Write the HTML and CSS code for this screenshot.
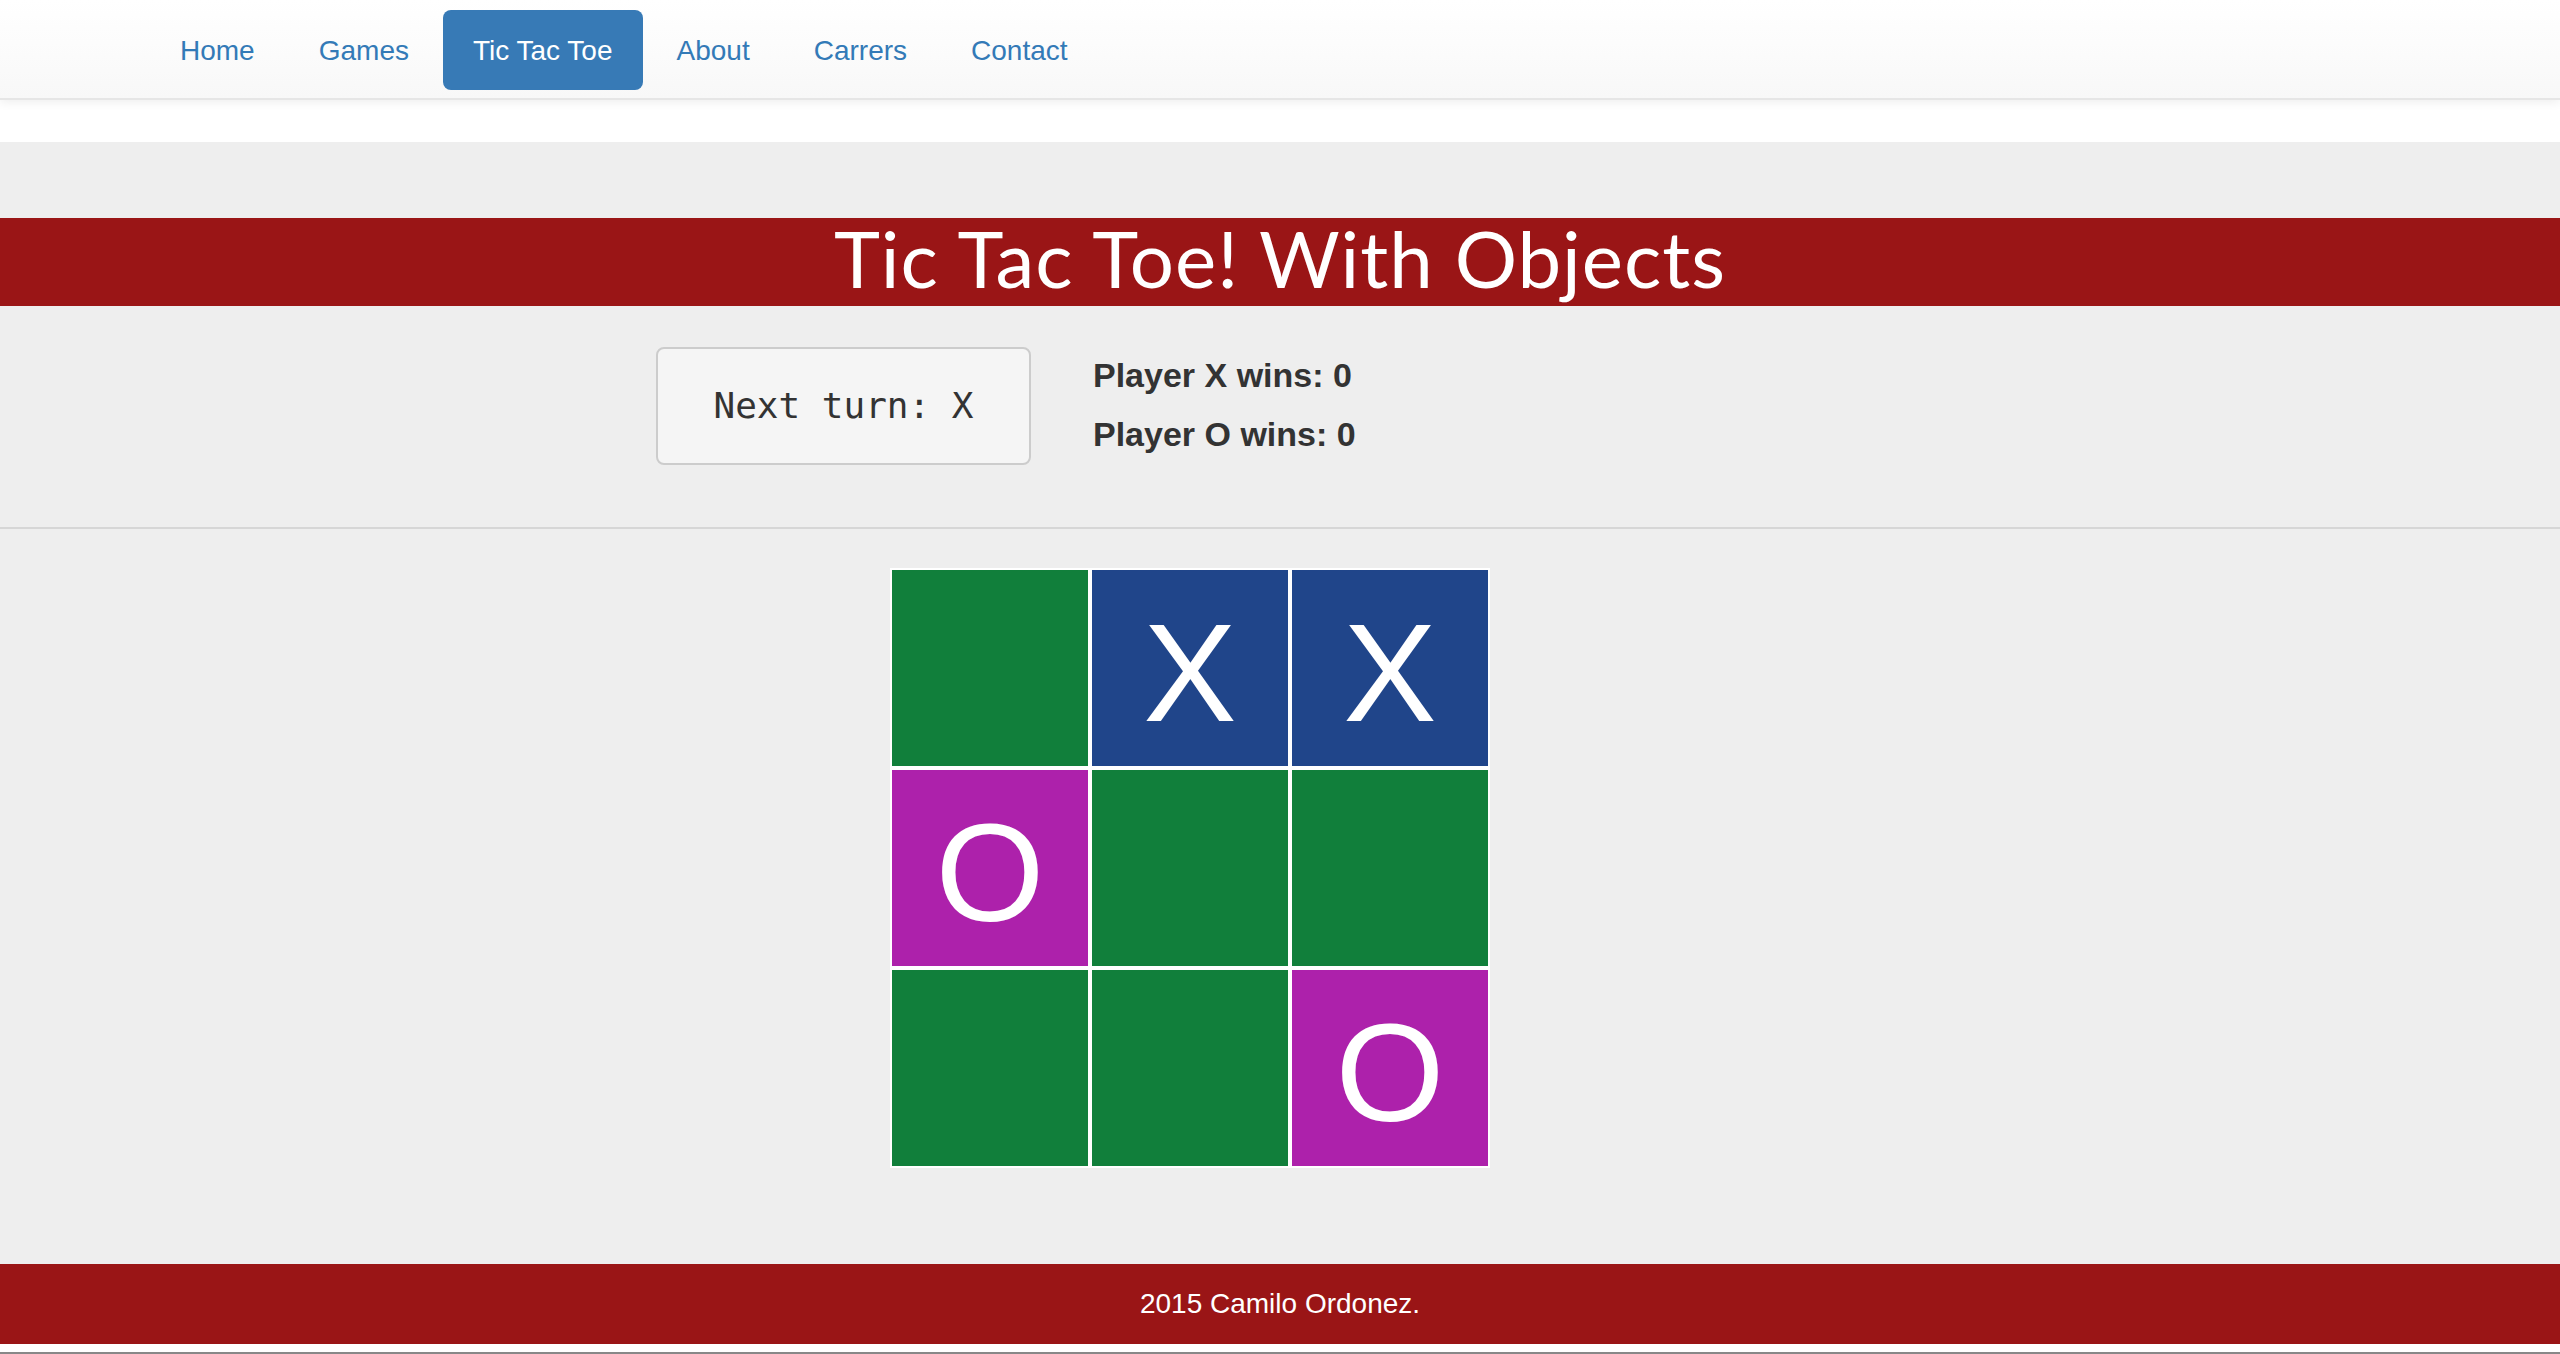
FILE: index.html
```html
<!DOCTYPE html>
<html lang="en">
<head>
<meta charset="utf-8">
<title>Tic Tac Toe! With Objects</title>
<link rel="stylesheet" href="styles.css">
</head>
<body>
<header class="navbar">
  <nav class="nav">
    <a class="nav-link" href="#">Home</a>
    <a class="nav-link" href="#">Games</a>
    <a class="nav-link active" href="#">Tic Tac Toe</a>
    <a class="nav-link" href="#">About</a>
    <a class="nav-link" href="#">Carrers</a>
    <a class="nav-link" href="#">Contact</a>
  </nav>
</header>
<main class="main">
  <h1 class="title">Tic Tac Toe! With Objects</h1>
  <section class="status">
    <pre class="turn">Next turn: X</pre>
    <div class="scores">
      <div class="score">Player X wins: 0</div>
      <div class="score">Player O wins: 0</div>
    </div>
  </section>
  <hr class="divider">
  <div class="board">
    <div class="cell empty"></div>
    <div class="cell x">X</div>
    <div class="cell x">X</div>
    <div class="cell o">O</div>
    <div class="cell empty"></div>
    <div class="cell empty"></div>
    <div class="cell empty"></div>
    <div class="cell empty"></div>
    <div class="cell o">O</div>
  </div>
</main>
<footer class="footer">2015 Camilo Ordonez.</footer>
<div class="window-edge"></div>
</body>
</html>
```
FILE: styles.css
```css
html, body {
  margin: 0;
  padding: 0;
  background: #ffffff;
  font-family: "Liberation Sans", Arial, sans-serif;
  color: #333333;
}

.navbar {
  position: relative;
  z-index: 2;
  box-sizing: border-box;
  height: 100px;
  background: linear-gradient(to bottom, #ffffff 0%, #f8f8f8 100%);
  border-bottom: 2px solid #e6e6e6;
  box-shadow: 0 2px 10px rgba(0, 0, 0, 0.075);
}

.nav {
  display: flex;
  gap: 4px;
  padding: 10px 0 0 150px;
}

.nav-link {
  display: block;
  box-sizing: border-box;
  height: 80px;
  padding: 2px 30px 0;
  line-height: 78px;
  font-size: 28px;
  color: #337ab7;
  text-decoration: none;
  border-radius: 8px;
}

.nav-link.active {
  background: #377ab6;
  color: #ffffff;
}

.main {
  margin-top: 42px;
  background: #eeeeee;
  padding: 76px 0 96px;
}

.title {
  margin: 0;
  height: 88px;
  box-sizing: border-box;
  padding-bottom: 8px;
  background: #9a1516;
  color: #ffffff;
  text-align: center;
  font-family: "Lato", "Open Sans", sans-serif;
  font-weight: 400;
  font-size: 78px;
  letter-spacing: 1px;
  line-height: 80px;
}

.status {
  display: flex;
  align-items: flex-start;
  gap: 62px;
  margin-top: 41px;
  padding-left: 656px;
}

.turn {
  margin: 0;
  box-sizing: border-box;
  width: 375px;
  height: 118px;
  background: #f5f5f5;
  border: 2px solid #cccccc;
  border-radius: 8px;
  color: #333333;
  font-family: "DejaVu Sans Mono", monospace;
  font-size: 36px;
  line-height: 114px;
  text-align: center;
}

.scores {
  display: flex;
  flex-direction: column;
  margin-top: -1px;
}

.score {
  font-size: 34px;
  font-weight: 700;
  line-height: 59px;
  color: #333333;
}

.divider {
  margin: 62px 0 0;
  height: 2px;
  border: 0;
  background: #d6d6d6;
}

.board {
  display: grid;
  grid-template-columns: repeat(3, 200px);
  grid-template-rows: repeat(3, 200px);
  width: 600px;
  margin: 39px 0 0 890px;
}

.cell {
  box-sizing: border-box;
  height: 200px;
  border: 2px solid #ffffff;
  color: #ffffff;
  font-family: "Liberation Sans", Arial, sans-serif;
  font-size: 140px;
  line-height: 206px;
  text-align: center;
  overflow: hidden;
}

.cell.empty { background: #117f3b; }
.cell.x { background: #20458a; }
.cell.o { background: #ad21ab; }

.footer {
  height: 80px;
  background: #9a1516;
  color: #ffffff;
  font-size: 28px;
  line-height: 80px;
  text-align: center;
}

.window-edge {
  height: 8px;
  background: #ffffff;
  border-bottom: 2px solid #888888;
}
```
